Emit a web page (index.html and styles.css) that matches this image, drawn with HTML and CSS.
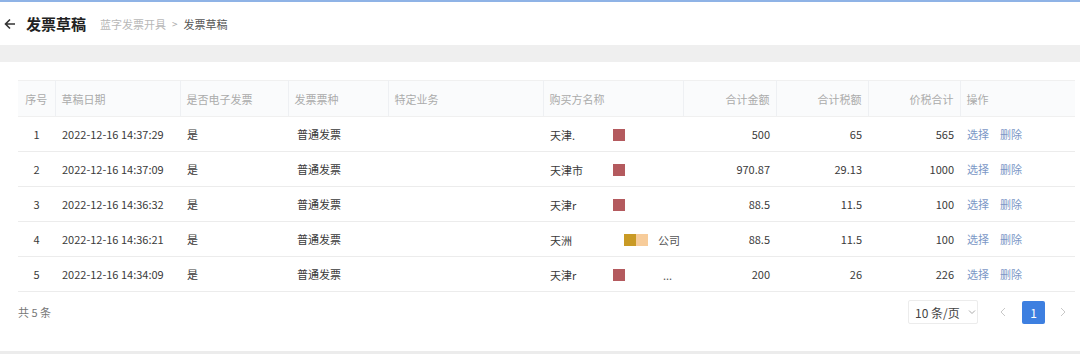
FILE: index.html
```html
<!DOCTYPE html>
<html lang="zh">
<head>
<meta charset="utf-8">
<link rel="stylesheet" href="styles.css">
</head>
<body>
<div class="topline"></div>
<header class="page-head">
  <svg class="back" width="12" height="12" viewBox="0 0 12 12"><path d="M11 6H1.5M6 1.5L1.5 6 6 10.5" fill="none" stroke="#333" stroke-width="1.6"/></svg>
  <h1 class="title">发票草稿</h1>
  <nav class="crumbs"><span class="crumb-link">蓝字发票开具</span><span class="sep">&gt;</span><span class="crumb-cur">发票草稿</span></nav>
</header>
<div class="band"></div>
<main class="card">
  <table class="grid">
    <colgroup>
      <col style="width:37px"><col style="width:125px"><col style="width:108px"><col style="width:100px"><col style="width:155px"><col style="width:140px"><col style="width:93px"><col style="width:92px"><col style="width:92px"><col style="width:115px">
    </colgroup>
    <thead>
      <tr>
        <th class="c">序号</th><th>草稿日期</th><th>是否电子发票</th><th>发票票种</th><th>特定业务</th><th>购买方名称</th><th class="r">合计金额</th><th class="r">合计税额</th><th class="r">价税合计</th><th>操作</th>
      </tr>
    </thead>
    <tbody>
      <tr><td class="c">1</td><td>2022-12-16 14:37:29</td><td>是</td><td class="type">普通发票</td><td></td><td><span class="buyer">天津.</span><span class="mask red"></span></td><td class="r">500</td><td class="r">65</td><td class="r">565</td><td><a class="op">选择</a><a class="op">删除</a></td></tr>
      <tr><td class="c">2</td><td>2022-12-16 14:37:09</td><td>是</td><td class="type">普通发票</td><td></td><td><span class="buyer">天津市</span><span class="mask red"></span></td><td class="r">970.87</td><td class="r">29.13</td><td class="r">1000</td><td><a class="op">选择</a><a class="op">删除</a></td></tr>
      <tr><td class="c">3</td><td>2022-12-16 14:36:32</td><td>是</td><td class="type">普通发票</td><td></td><td><span class="buyer">天津r</span><span class="mask red"></span></td><td class="r">88.5</td><td class="r">11.5</td><td class="r">100</td><td><a class="op">选择</a><a class="op">删除</a></td></tr>
      <tr><td class="c">4</td><td>2022-12-16 14:36:21</td><td>是</td><td class="type">普通发票</td><td></td><td><span class="buyer">天洲</span><span class="mask gold"></span><span class="mask peach"></span><span class="tail">公司</span></td><td class="r">88.5</td><td class="r">11.5</td><td class="r">100</td><td><a class="op">选择</a><a class="op">删除</a></td></tr>
      <tr><td class="c">5</td><td>2022-12-16 14:34:09</td><td>是</td><td class="type">普通发票</td><td></td><td><span class="buyer">天津r</span><span class="mask red"></span><span class="tail dots">...</span></td><td class="r">200</td><td class="r">26</td><td class="r">226</td><td><a class="op">选择</a><a class="op">删除</a></td></tr>
    </tbody>
  </table>
  <footer class="pager">
    <span class="total">共 5 条</span>
    <div class="pager-right">
      <div class="size">10 条/页 <svg width="8" height="6" viewBox="0 0 8 6"><path d="M1 1.5L4 4.5 7 1.5" fill="none" stroke="#aaa" stroke-width="1"/></svg></div>
      <svg class="arrow" width="6" height="10" viewBox="0 0 6 10"><path d="M5 1L1 5 5 9" fill="none" stroke="#c8c8c8" stroke-width="1"/></svg>
      <span class="page">1</span>
      <svg class="arrow" width="6" height="10" viewBox="0 0 6 10"><path d="M1 1L5 5 1 9" fill="none" stroke="#c8c8c8" stroke-width="1"/></svg>
    </div>
  </footer>
</main>
<div class="bottomline"></div>
</body>
</html>
```
FILE: styles.css
```css
* { box-sizing: border-box; }
html, body { margin: 0; padding: 0; background: #fff; }
body {
  width: 1080px; height: 354px; overflow: hidden;
  font-family: "Noto Sans CJK SC", "Liberation Sans", sans-serif;
  color: #333;
  display: flex; flex-direction: column;
}
.topline { height: 2px; background: #8fb3e6; }
.page-head {
  height: 43px;
  display: flex; align-items: center;
  padding-left: 4px;
}
.back { margin-right: 10px; }
.title { margin: 0; font-size: 15px; font-weight: 700; color: #222; line-height: 20px; }
.crumbs { margin-left: 14px; font-size: 11px; display: flex; align-items: center; gap: 6px; }
.crumb-link { color: #b8b8b8; }
.sep { color: #aaa; font-size: 10px; }
.crumb-cur { color: #555; }
.band { height: 17px; background: #efefef; }
.card { padding: 18px 5px 0 18px; flex: 1; }
.grid { width: 1057px; table-layout: fixed; border-collapse: collapse; font-size: 11px; }
.grid th {
  height: 36px; background: #fafbfc; font-weight: 400; color: #ababab;
  text-align: left; padding: 0 6px; border-right: 1px solid #eef0f3;
  border-top: 1px solid #f0f0f0; border-bottom: 1px solid #f0f0f0;
  white-space: nowrap;
}
.grid th:last-child { border-right: none; }
.grid td {
  height: 35px; padding: 0 7px; border-bottom: 1px solid #ececec;
  white-space: nowrap; color: #3a3a3a;
}
.grid .c { text-align: center; padding: 0; }
.grid .r { text-align: right; padding-right: 6px; }
.grid td.type { padding-left: 9px; }
.buyer { display: inline-block; width: 63px; vertical-align: middle; }
.mask { display: inline-block; width: 12px; height: 12px; vertical-align: middle; }
.mask.red { background: #b45a5e; }
.mask.gold { width: 12px; margin-left: 11px; background: #c99a25; }
.mask.peach { width: 12px; background: #f7cc9a; }
.tail { display: inline-block; margin-left: 10px; vertical-align: middle; color: #555; }
.tail.dots { margin-left: 38px; }
.op { color: #7b97c6; margin-right: 11px; cursor: pointer; }
.pager { display: flex; align-items: center; justify-content: space-between; height: 40px; padding-right: 9px; }
.total { font-size: 11px; color: #777; }
.pager-right { display: flex; align-items: center; }
.size {
  width: 70px; height: 24px; border: 1px solid #ececec; border-radius: 2px;
  font-size: 12px; color: #444; display: flex; align-items: center; padding-left: 6px; gap: 8px;
}
.arrow { margin: 0 16px 0 22px; }
.arrow:last-child { margin: 0 0 0 15px; }
.page {
  width: 23px; height: 23px; background: #3d7fe0; color: #fff; border-radius: 2px;
  font-size: 12px; display: flex; align-items: center; justify-content: center;
}
.bottomline { height: 3px; background: #ececec; }
```
